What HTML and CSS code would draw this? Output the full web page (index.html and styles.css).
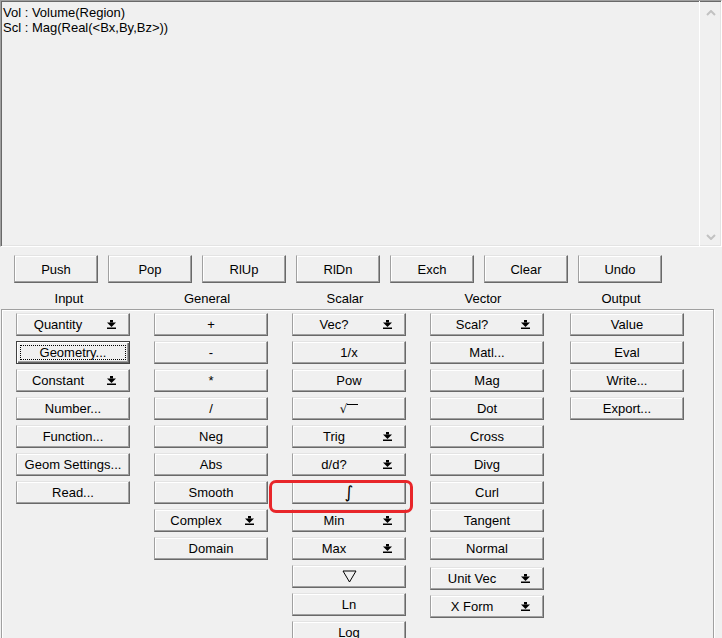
FILE: index.html
```html
<!doctype html>
<html lang="en">
<head>
<meta charset="utf-8">
<title>Expression Editor</title>
<link rel="stylesheet" href="styles.css">
</head>
<body>
<svg class="defs" width="0" height="0">
  <!-- the little "drop" arrow on menu buttons -->
  <symbol id="arr" viewBox="0 0 9 9">
    <rect x="3" y="0" width="3" height="2.5"/>
    <polygon points="0,2.5 9,2.5 4.5,7"/>
    <rect x="0" y="7.5" width="9" height="1.5"/>
  </symbol>
</svg>

<div class="editor">
  <div class="lines">Vol : Volume(Region)
Scl : Mag(Real(&lt;Bx,By,Bz&gt;))</div>
  <div class="vscroll">
    <svg width="10" height="6" viewBox="0 0 10 6"><polyline points="1,5 5,1 9,5"/></svg>
    <svg width="10" height="6" viewBox="0 0 10 6"><polyline points="1,1 5,5 9,1"/></svg>
  </div>
</div>

<div class="stack">
  <button class="btn">Push</button>
  <button class="btn">Pop</button>
  <button class="btn">RlUp</button>
  <button class="btn">RlDn</button>
  <button class="btn">Exch</button>
  <button class="btn">Clear</button>
  <button class="btn">Undo</button>
</div>

<div class="heads">
  <span>Input</span>
  <span>General</span>
  <span>Scalar</span>
  <span>Vector</span>
  <span>Output</span>
</div>

<div class="panel">
  <div class="col">
    <button class="btn drop"><span class="lbl">Quantity</span><svg class="arr"><use href="#arr"/></svg></button>
    <button class="btn focus">Geometry...</button>
    <button class="btn drop"><span class="lbl">Constant</span><svg class="arr"><use href="#arr"/></svg></button>
    <button class="btn">Number...</button>
    <button class="btn">Function...</button>
    <button class="btn">Geom Settings...</button>
    <button class="btn">Read...</button>
  </div>
  <div class="col">
    <button class="btn">+</button>
    <button class="btn">-</button>
    <button class="btn">*</button>
    <button class="btn">/</button>
    <button class="btn">Neg</button>
    <button class="btn">Abs</button>
    <button class="btn">Smooth</button>
    <button class="btn drop"><span class="lbl">Complex</span><svg class="arr"><use href="#arr"/></svg></button>
    <button class="btn">Domain</button>
  </div>
  <div class="col">
    <button class="btn drop"><span class="lbl">Vec?</span><svg class="arr"><use href="#arr"/></svg></button>
    <button class="btn">1/x</button>
    <button class="btn">Pow</button>
    <button class="btn"><span class="sqrt">√<span class="bar"></span></span></button>
    <button class="btn drop"><span class="lbl">Trig</span><svg class="arr"><use href="#arr"/></svg></button>
    <button class="btn drop"><span class="lbl">d/d?</span><svg class="arr"><use href="#arr"/></svg></button>
    <div class="hl">
      <button class="btn"><span class="integ">∫</span></button>
      <span class="mark"></span>
    </div>
    <button class="btn drop"><span class="lbl">Min</span><svg class="arr"><use href="#arr"/></svg></button>
    <button class="btn drop"><span class="lbl">Max</span><svg class="arr"><use href="#arr"/></svg></button>
    <button class="btn"><svg class="nabla" width="15" height="13" viewBox="0 0 15 13"><polygon points="1,1 14,1 7.5,12"/></svg></button>
    <button class="btn">Ln</button>
    <button class="btn">Log</button>
  </div>
  <div class="col">
    <button class="btn drop"><span class="lbl">Scal?</span><svg class="arr"><use href="#arr"/></svg></button>
    <button class="btn">Matl...</button>
    <button class="btn">Mag</button>
    <button class="btn">Dot</button>
    <button class="btn">Cross</button>
    <button class="btn">Divg</button>
    <button class="btn">Curl</button>
    <button class="btn">Tangent</button>
    <button class="btn">Normal</button>
    <button class="btn drop sep"><span class="lbl">Unit Vec</span><svg class="arr"><use href="#arr"/></svg></button>
    <button class="btn drop"><span class="lbl">X Form</span><svg class="arr"><use href="#arr"/></svg></button>
  </div>
  <div class="col out">
    <button class="btn">Value</button>
    <button class="btn">Eval</button>
    <button class="btn">Write...</button>
    <button class="btn">Export...</button>
  </div>
</div>
</body>
</html>
```

FILE: styles.css
```css
html,
body {
  margin: 0;
  height: 638px;
  overflow: hidden;
  background: #f0f0f0;
  color: #000;
  font: 13px "Liberation Sans", Arial, sans-serif;
}

.defs {
  position: absolute;
  width: 0;
  height: 0;
}

/* expression text box */
.editor {
  display: flex;
  height: 247px;
  box-sizing: border-box;
  border: 1px solid;
  border-color: #a0a0a0 #fff #fff #a0a0a0;
  box-shadow: inset 1px 1px #696969, inset -1px -1px #e3e3e3;
}
.lines {
  flex: 1;
  padding: 4px 0 0 2px;
  line-height: 15px;
  white-space: pre;
}
.vscroll {
  width: 21px;
  border-left: 1px solid #fff;
  display: flex;
  flex-direction: column;
  justify-content: space-between;
  align-items: center;
  padding: 9px 0 6px;
}
.vscroll polyline {
  fill: none;
  stroke: #c2c2c2;
  stroke-width: 2;
}

/* buttons */
.btn {
  display: flex;
  align-items: center;
  justify-content: center;
  box-sizing: border-box;
  margin: 0;
  padding: 0;
  background: #f0f0f0;
  color: #000;
  font: inherit;
  border: 1px solid;
  border-color: #e3e3e3 #696969 #696969 #a0a0a0;
  box-shadow: inset -1px -1px #a0a0a0, inset 1px 1px #fff;
}
.btn.focus {
  position: relative;
  border-color: #404040;
  box-shadow: inset 1px 1px #fff, inset -1px -1px #696969, inset -2px -2px #a0a0a0;
}
.btn.focus::after {
  content: "";
  position: absolute;
  inset: 3px;
  border: 1px dotted #000;
}

.drop {
  display: grid;
  grid-template-columns: 82px 9px;
  column-gap: 8px;
  justify-content: start;
}
.drop .lbl {
  text-align: center;
}
.arr {
  width: 9px;
  height: 9px;
  fill: #000;
}

.sqrt {
  display: inline-flex;
  align-items: flex-start;
  font-family: "DejaVu Sans", sans-serif;
  font-size: 12px;
}
.sqrt .bar {
  width: 11px;
  margin-top: 2px;
  border-top: 1px solid #000;
}
.integ {
  font-family: "DejaVu Sans", sans-serif;
  font-style: italic;
  font-size: 17px;
  line-height: 1;
}
.nabla polygon {
  fill: none;
  stroke: #000;
  stroke-width: 1;
}

/* push / pop row */
.stack {
  display: flex;
  gap: 10px;
  margin-top: 8px;
  padding-left: 14px;
}
.stack .btn {
  width: 84px;
  height: 28px;
}

.heads {
  display: grid;
  grid-template-columns: repeat(5, 138px);
  padding-top: 6px;
  line-height: 20px;
  text-align: center;
}

/* function groups */
.panel {
  display: grid;
  grid-template-columns: repeat(5, 138px);
  align-items: start;
  width: 713px;
  height: 360px;
  box-sizing: border-box;
  margin-left: 1px;
  padding-top: 3px;
  border: 1px solid #a0a0a0;
  box-shadow: inset 1px 1px #fff, 1px 1px #fff;
}
.col {
  display: flex;
  flex-direction: column;
  gap: 5px;
  padding-left: 14px;
}
.col.out {
  padding-left: 16px;
}
.col .btn {
  width: 114px;
  height: 23px;
}
.col .sep {
  margin-top: 2px;
}

.hl {
  position: relative;
}
.mark {
  position: absolute;
  top: -1px;
  left: -23px;
  right: 3px;
  bottom: -9px;
  border: 3px solid #e8262a;
  border-radius: 7px;
}
```
